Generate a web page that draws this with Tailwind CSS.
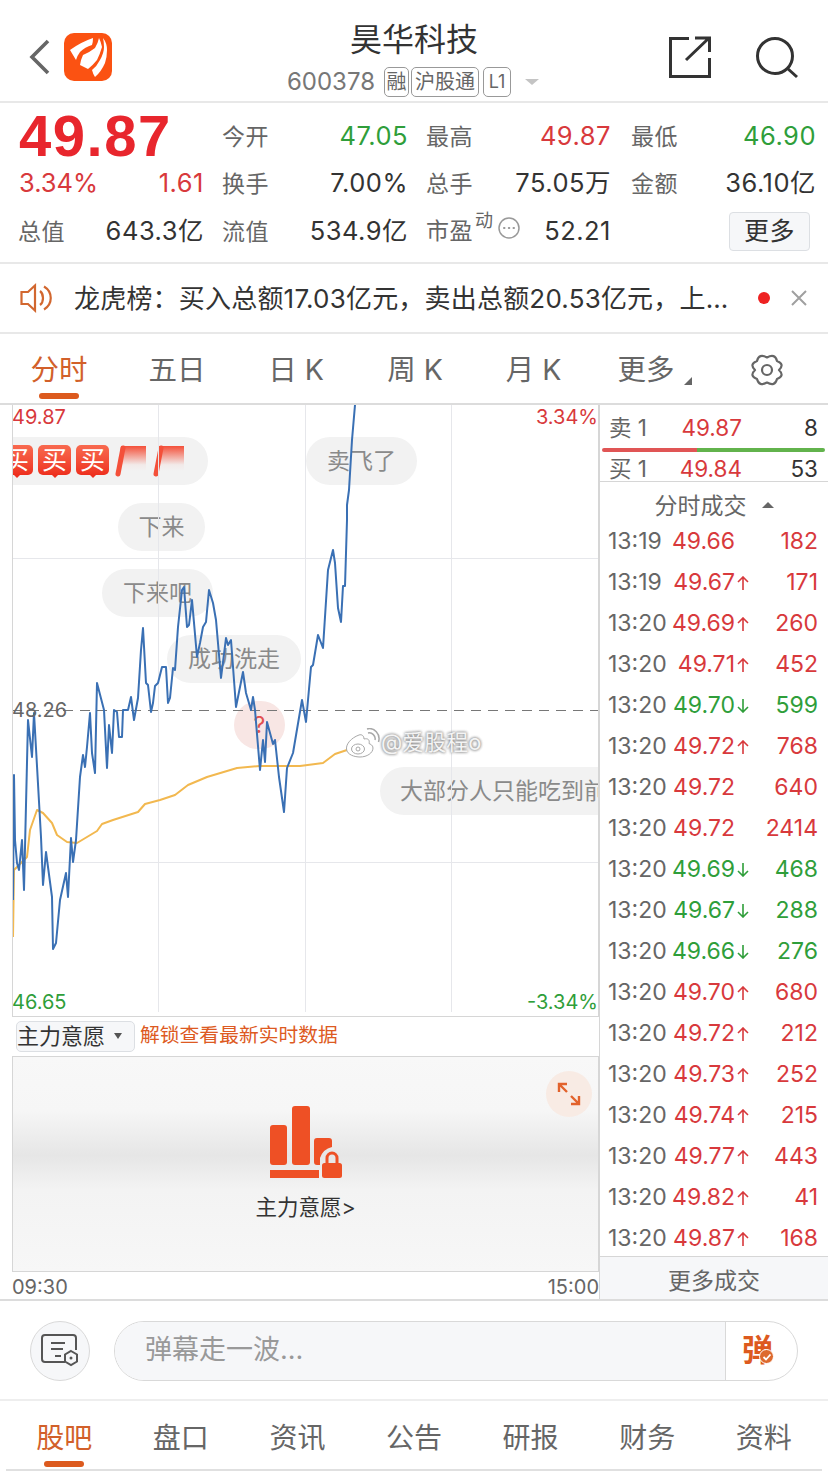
<!DOCTYPE html>
<html lang="zh">

<head>
    <meta charset="UTF-8">
    <meta name="viewport" content="width=device-width, initial-scale=1.0">
    <title>昊华科技</title>
    <script src="https://cdn.jsdelivr.net/npm/@tailwindcss/browser@4"></script>
</head>

<body class="bg-white">
    <div id="page" class="w-[828px] h-[1483px] flex flex-col bg-white overflow-hidden text-[#333] font-['Inter','Noto_Sans_CJK_SC',sans-serif]">

        <!-- HEADER -->
        <div id="header" class="relative h-[103px] shrink-0 flex items-start border-b-2 border-[#e8e8e8]">
            <svg class="mt-[39px] ml-[28px] w-[22px] h-[36px]" viewBox="0 0 22 36" fill="none" stroke="#666" stroke-width="3.600">
                <path d="M20 2 L4 18 L20 34" />
            </svg>
            <div class="mt-[33px] ml-[14px] w-[48px] h-[48px] rounded-[10px] bg-[#fb5212]">
                <svg viewBox="0 0 48 48" class="w-full h-full" fill="#fff">
                    <path d="M6 17 Q17 9 29 5 Q29 9 28 12 Q21 14 16 19 Q13 23 12 27 Q9 22 6 17 Z" />
                    <path d="M16 32 Q17 26 19 22 Q26 19 31 15 Q34 10 35 5 Q37 9 38 14 Q36 21 33 27 Q29 32 24 36 Q20 34 16 32 Z" />
                    <path d="M28 37 Q33 33 36 27 Q40 20 40 14 Q40 9 39 5 Q43 10 43 17 Q43 24 41 30 Q37 39 31 44 Q29 41 28 37 Z" />
                </svg>
            </div>
            <div class="absolute left-0 right-0 top-[21px] flex flex-col items-center">
                <div class="text-[32px] leading-[38px] text-[#333]">昊华科技</div>
                <div class="flex items-center mt-[7px] h-[32px] ml-[-2px]">
                    <span class="text-[24px] text-[#777] mr-[9px]">600378</span>
                    <span class="h-[30px] w-[25px] border border-[#999] rounded-[5px] text-[20px] leading-[28px] text-center text-[#666]">融</span>
                    <span class="h-[30px] w-[68px] ml-[2px] border border-[#999] rounded-[5px] text-[20px] leading-[28px] text-center text-[#666]">沪股通</span>
                    <span class="h-[30px] w-[28px] ml-[4px] border border-[#999] rounded-[5px] text-[18px] leading-[28px] text-center text-[#666]">L1</span>
                    <span class="ml-[14px] w-0 h-0 border-x-[7px] border-x-transparent border-t-[6px] border-t-[#c4c4c4]"></span>
                </div>
            </div>
            <div class="ml-auto mt-[35px] mr-[29px] flex gap-[43px]">
                <svg class="w-[44px] h-[44px]" viewBox="0 0 44 44" fill="none" stroke="#333" stroke-width="3">
                    <path d="M21 3.500 H2.500 V41.500 H41.500 V23" />
                    <path d="M18 25 L41 3 M27 3 H41.500 V17" />
                </svg>
                <svg class="w-[44px] h-[44px]" viewBox="0 0 44 44" fill="none" stroke="#333" stroke-width="3">
                    <circle cx="20" cy="21" r="17.500" />
                    <path d="M32 33 L42 42" />
                </svg>
            </div>
        </div>

        <!-- STATS -->
        <div id="stats" class="h-[161px] shrink-0 border-b-2 border-[#e8e8e8] pl-[18px] pt-[9px] grid grid-cols-[186px_186px_185px_187px] grid-rows-[48px_47px_48px] gap-x-[18px] text-[25.500px] tracking-[0.500px] text-[#333] items-center">
            <div class="ml-[1px] text-[#e8262d] font-bold text-[58px] leading-[48px] tracking-[1.500px] font-['Liberation_Sans']">49.87</div>
            <div class="flex items-baseline justify-between"><span class="text-[#666] text-[23px]">今开</span><span class="text-[#2f9e3a]">47.05</span></div>
            <div class="flex items-baseline justify-between"><span class="text-[#666] text-[23px]">最高</span><span class="text-[#d8393c]">49.87</span></div>
            <div class="flex items-baseline justify-between pl-[2px]"><span class="text-[#666] text-[23px]">最低</span><span class="text-[#2f9e3a]">46.90</span></div>

            <div class="flex justify-between ml-[1px] text-[#d8393c]"><span class="tracking-[0px]">3.34%</span><span>1.61</span></div>
            <div class="flex items-baseline justify-between"><span class="text-[#666] text-[23px]">换手</span><span>7.00%</span></div>
            <div class="flex items-baseline justify-between"><span class="text-[#666] text-[23px]">总手</span><span>75.05万</span></div>
            <div class="flex items-baseline justify-between pl-[2px]"><span class="text-[#666] text-[23px]">金额</span><span>36.10亿</span></div>

            <div class="flex items-baseline justify-between"><span class="text-[#666] text-[23px]">总值</span><span>643.3亿</span></div>
            <div class="flex items-baseline justify-between"><span class="text-[#666] text-[23px]">流值</span><span>534.9亿</span></div>
            <div class="flex items-center">
                <span class="text-[#666] text-[23px]">市盈</span>
                <span class="text-[#666] text-[18px] leading-[18px] mb-[20px] ml-[2px]">动</span>
                <svg class="w-[22px] h-[22px] mb-[6px] ml-[4px]" viewBox="0 0 22 22" fill="none" stroke="#999" stroke-width="1.500">
                    <circle cx="11" cy="11" r="10" />
                    <path d="M6 11h.5M10.800 11h.5M15.500 11h.5" stroke-width="2" stroke-linecap="round" />
                </svg>
                <span class="ml-auto">52.21</span>
            </div>
            <div class="flex justify-end pr-[6px]">
                <div class="w-[81px] h-[39px] rounded-[4px] border border-[#dcdfe3] bg-[#f6f7f9] text-center leading-[37px] text-[25px]">更多</div>
            </div>
        </div>

        <!-- NOTICE -->
        <div id="notice" class="h-[70px] shrink-0 border-b-2 border-[#e8e8e8] flex items-center pl-[20px]">
            <svg class="w-[34px] h-[30px]" viewBox="0 0 34 30" fill="none" stroke="#d2672f" stroke-width="2.200">
                <path d="M1.500 9 H8 L15 2.500 V27.500 L8 21 H1.500 Z" />
                <path d="M20 8 C24 11 24 19 20 22" />
                <path d="M24 3.500 C33 9 33 21 24 26.500" />
            </svg>
            <span class="ml-[20px] text-[26px] tracking-[0.200px] text-[#333] whitespace-nowrap">龙虎榜&#xFF1A;买入总额17.03亿元&#xFF0C;卖出总额20.53亿元&#xFF0C;上…</span>
            <span class="ml-auto w-[12px] h-[12px] rounded-full bg-[#ee2222]"></span>
            <svg class="ml-[20px] mr-[20px] w-[18px] h-[18px]" viewBox="0 0 18 18" stroke="#a0a0a0" stroke-width="2">
                <path d="M2 2 L16 16 M16 2 L2 16" />
            </svg>
        </div>

        <!-- PERIOD TABS -->
        <div id="tabs" class="h-[71px] shrink-0 border-b-2 border-[#dcdcdc] grid grid-cols-[repeat(7,118px)] text-[28.500px] text-[#666] text-center">
            <div class="relative leading-[72px] text-[#d2602a]">分时<span class="absolute left-[39px] top-[59px] w-[40px] h-[6px] rounded-full bg-[#dc5a1e]"></span></div>
            <div class="leading-[72px]">五日</div>
            <div class="leading-[72px] pl-[2px]">日 K</div>
            <div class="leading-[72px] pl-[4px]">周 K</div>
            <div class="leading-[72px] pl-[5px]">月 K</div>
            <div class="relative leading-[72px] pr-[6px]">更多<span class="absolute left-[94px] top-[43px] w-0 h-0 border-l-[8px] border-l-transparent border-b-[8px] border-b-[#666]"></span></div>
            <div class="flex items-center justify-center">
                <svg class="w-[34px] h-[32px]" viewBox="0 0 32 32" fill="none" stroke="#666" stroke-width="2.200" stroke-linejoin="round">
                    <path d="M16 3.500 Q24 -1 26 7 Q34 10 28 16 Q34 22 26 25 Q24 33 16 28.500 Q8 33 6 25 Q-2 22 4 16 Q-2 10 6 7 Q8 -1 16 3.500 Z" />
                    <circle cx="16" cy="16" r="5" />
                </svg>
            </div>
        </div>

        <!-- MAIN -->
        <div id="main" class="h-[896px] shrink-0 flex border-b-2 border-[#dcdcdc]">
            <div class="w-[599px] shrink-0 flex flex-col pl-[12px]">
                <div id="chart" class="relative h-[612px] shrink-0 overflow-hidden border-x border-b border-[#d6d6d6] box-border">
                    <!-- danmaku bubbles -->
                    <div class="absolute left-[-30px] top-[32px] w-[225px] h-[48px] rounded-full bg-[#f2f2f2] flex items-center pl-[17px] gap-[5px]">
                        <span class="relative w-[33px] h-[30px] mb-[2px] rounded-[5px] bg-gradient-to-b from-[#f8694f] to-[#ee2f1e] text-white text-[25px] leading-[30px] text-center">买<span class="absolute left-[13px] top-[29px] w-0 h-0 border-x-[4px] border-x-transparent border-t-[4px] border-t-[#ee2f1e]"></span></span>
                        <span class="relative w-[33px] h-[30px] mb-[2px] rounded-[5px] bg-gradient-to-b from-[#f8694f] to-[#ee2f1e] text-white text-[25px] leading-[30px] text-center">买<span class="absolute left-[13px] top-[29px] w-0 h-0 border-x-[4px] border-x-transparent border-t-[4px] border-t-[#ee2f1e]"></span></span>
                        <span class="relative w-[33px] h-[30px] mb-[2px] rounded-[5px] bg-gradient-to-b from-[#f8694f] to-[#ee2f1e] text-white text-[25px] leading-[30px] text-center">买<span class="absolute left-[13px] top-[29px] w-0 h-0 border-x-[4px] border-x-transparent border-t-[4px] border-t-[#ee2f1e]"></span></span>
                        <svg class="w-[32px] h-[32px] ml-[1px]" viewBox="0 0 32 32" fill="none">
                            <defs>
                                <linearGradient id="fade" x1="0" y1="0" x2="0" y2="1">
                                    <stop offset="0" stop-color="#f4503a" />
                                    <stop offset="0.750" stop-color="#f4503a" stop-opacity="0.050" />
                                    <stop offset="1" stop-color="#f4503a" stop-opacity="0" />
                                </linearGradient>
                            </defs>
                            <path d="M6 1 H31 V26 H3 Z" fill="url(#fade)" />
                            <path d="M8 3 L3 29" stroke="#f4503a" stroke-width="5" stroke-linecap="round" />
                        </svg>
                        <svg class="w-[32px] h-[32px] ml-[1px]" viewBox="0 0 32 32" fill="none">
                            <path d="M6 1 H31 V26 H3 Z" fill="url(#fade)" />
                            <path d="M8 3 L3 29" stroke="#f4503a" stroke-width="5" stroke-linecap="round" />
                        </svg>
                    </div>
                    <div class="absolute left-[293px] top-[32px] w-[111px] h-[48px] rounded-full bg-[#f2f2f2] text-[#8a8a8a] text-[23px] leading-[48px] text-center">卖飞了</div>
                    <div class="absolute left-[105px] top-[98px] w-[87px] h-[48px] rounded-full bg-[#f2f2f2] text-[#8a8a8a] text-[23px] leading-[48px] text-center">下来</div>
                    <div class="absolute left-[89px] top-[164px] w-[111px] h-[48px] rounded-full bg-[#f2f2f2] text-[#8a8a8a] text-[23px] leading-[48px] text-center">下来吧</div>
                    <div class="absolute left-[154px] top-[230px] w-[134px] h-[48px] rounded-full bg-[#f2f2f2] text-[#8a8a8a] text-[23px] leading-[48px] text-center">成功洗走</div>
                    <div class="absolute left-[221px] top-[296px] w-[51px] h-[48px] rounded-full bg-[#f8e6e4] text-[#e2514f] text-[23px] leading-[48px] text-center">?</div>
                    <div class="absolute left-[367px] top-[362px] w-[260px] h-[48px] rounded-full bg-[#f2f2f2] text-[#8a8a8a] text-[23px] leading-[48px] pl-[20px] whitespace-nowrap">大部分人只能吃到前</div>

                    <svg class="absolute left-[-1px] top-0" width="586" height="611" viewBox="12 405 586 611" fill="none">
                        <path d="M158.500 405 V1012 M305.500 405 V1012 M451.500 405 V1012 M12 558.500 H598 M12 862.500 H598" stroke="#e6e7eb" stroke-width="1" />
                        <path d="M12 710.500 H598" stroke="#777" stroke-width="1.200" stroke-dasharray="10 7" />
                        <polyline stroke="#f2b84f" stroke-width="2" stroke-linejoin="round"
                            points="13,937 14,870 20,864 27,857 30,830 37,810 43,813 52,823 57,835 67,842 77,843 97,831 102,824 113,820 138,812 145,804 160,800 175,795 188,785 207,777 237,768 260,766 300,766 323,763 335,754 350,749" />
                        <polyline stroke="#3a70b4" stroke-width="2" stroke-linejoin="round"
                            points="13,900 14,775 15,840 17,863 19,870 22,840 24,890 28,720 32,757 34,713 41,837 43,885 46,852 52,897 53,949 56,943 60,900 66,873 68,897 71,838 73,862 76,840 80,777 83,755 85,767 87,747 90,713 92,753 95,773 97,683 104,710 107,768 109,725 112,753 114,710 117,712 119,737 122,737 123,710 128,710 131,697 134,720 138,698 141,650 143,628 146,683 148,685 151,712 153,703 155,686 158,683 162,667 166,667 168,703 170,698 173,668 175,670 178,627 182,590 184,587 187,627 189,625 192,600 197,657 200,643 203,627 206,622 209,590 213,603 216,620 221,678 226,638 228,645 231,640 236,707 243,672 246,693 251,710 253,697 255,710 260,770 263,740 265,762 267,722 273,744 275,740 279,777 284,812 287,768 293,753 302,700 306,722 311,667 313,665 318,635 323,648 328,570 333,550 335,563 338,608 341,622 343,586 345,586 347,520 347,505 349,490 352,440 355,405" />
                    </svg>

                    <span class="absolute left-[-1px] top-0 text-[20px] leading-[24px] text-[#d8393c]">49.87</span>
                    <span class="absolute right-0 top-0 text-[20px] leading-[24px] text-[#d8393c]">3.34%</span>
                    <span class="absolute left-[-1px] top-[293px] text-[20px] leading-[24px] text-[#666]">48.26</span>
                    <span class="absolute left-[-1px] top-[585px] text-[20px] leading-[24px] text-[#2f9e3a]">46.65</span>
                    <span class="absolute right-0 top-[585px] text-[20px] leading-[24px] text-[#2f9e3a]">-3.34%</span>

                    <!-- watermark -->
                    <div class="absolute left-[332px] top-[321px] flex items-center">
                        <svg class="w-[35px] h-[30px]" viewBox="0 0 35 30" fill="#fff" stroke="#a8a8a8" stroke-width="1">
                            <path d="M14 7 C6 10 1 16 1.500 21 C2 27 10 29 15 29 C22 29 28 25 28 20 C28 17 25 16 24 15.500 C25 12 23 10 19 11 C19 8 17 6 14 7 Z" />
                            <ellipse cx="13" cy="21" rx="6.500" ry="5" />
                            <circle cx="13" cy="21" r="2" />
                            <path d="M23 5 C27 4 31 8 30 12 M22 1 C29 -1 36 6 33.500 14" fill="none" stroke-width="1.500" />
                        </svg>
                        <span class="ml-[1px] text-[22px] text-[#f4f4f4] [text-shadow:0_0_3px_#888,0_0_3px_#888]">@爱股程o</span>
                    </div>
                </div>

                <div class="h-[39px] shrink-0 flex items-center pb-[1px] pl-[4px]">
                    <div class="w-[119px] h-[31px] rounded-[5px] border border-[#dcdfe3] bg-[#f6f7f9] flex items-center text-[22px] text-[#333] whitespace-nowrap">
                        主力意愿
                        <span class="ml-[9px] w-0 h-0 border-x-[4px] border-x-transparent border-t-[6px] border-t-[#555]"></span>
                    </div>
                    <span class="ml-[5px] text-[19.800px] text-[#dd5a22] whitespace-nowrap">解锁查看最新实时数据</span>
                </div>

                <div id="panel" class="relative h-[216px] shrink-0 border border-[#d6d6d6] bg-[linear-gradient(to_bottom,#f8f8f8_0%,#f6f6f6_25%,#e6e6e6_46%,#f3f3f3_62%,#f7f7f7_100%)] flex flex-col items-center">
                    <svg class="mt-[49px] w-[72px] h-[72px]" viewBox="0 0 72 72" fill="#ee5025">
                        <rect x="0" y="19" width="17" height="40" rx="3" />
                        <rect x="22" y="0" width="18" height="59" rx="3" />
                        <path d="M44 35 Q44 32 47 32 H59 Q62 32 62 35 V41 Q53 43 50 52 V59 H47 Q44 59 44 56 Z" />
                        <rect x="0" y="64" width="49" height="8" />
                        <path d="M57 58 V52 A5 5 0 0 1 67 52 V58" fill="none" stroke="#ee5025" stroke-width="3" />
                        <rect x="52" y="57" width="20" height="15" rx="2.500" />
                    </svg>
                    <span class="mt-[15px] text-[21.500px] leading-[28px] text-[#333]">主力意愿&gt;</span>
                    <div class="absolute right-[6px] top-[14px] w-[46px] h-[46px] rounded-full bg-[#f8ebe4] flex items-center justify-center">
                        <svg class="w-[24px] h-[24px]" viewBox="0 0 24 24" fill="none" stroke="#e2622c" stroke-width="2.400">
                            <path d="M2 10 V2 H10 M2 2 L10 10 M14 14 L22 22 M22 14 V22 H14" />
                        </svg>
                    </div>
                </div>

                <div class="flex-1 flex items-center justify-between text-[20px] text-[#666]">
                    <span>09:30</span><span>15:00</span>
                </div>
            </div>

            <!-- ORDER BOOK -->
            <div id="book" class="flex-1 min-h-0 flex flex-col border-l border-[#d6d6d6]">
                <div class="h-[43px] shrink-0 flex items-center pl-[9px] pr-[10px] text-[22.500px] pt-[3px]">
                    <span class="w-[64px] text-[#666]">卖 1</span>
                    <span class="w-[69px] text-right text-[#d8393c]">49.87</span>
                    <span class="ml-auto text-[#333]">8</span>
                </div>
                <div class="h-[4px] shrink-0 ml-[2px] mr-[3px] flex">
                    <span class="w-[95px] bg-[#e05555] rounded-l-full"></span>
                    <span class="flex-1 bg-[#62b34c] rounded-r-full"></span>
                </div>
                <div class="h-[30px] shrink-0 flex items-center pl-[9px] pr-[10px] pt-[4px] text-[22.500px] border-b border-[#d6d6d6]">
                    <span class="w-[64px] text-[#666]">买 1</span>
                    <span class="w-[69px] text-right text-[#d8393c]">49.84</span>
                    <span class="ml-auto text-[#333]">53</span>
                </div>
                <div class="h-[39px] shrink-0 flex items-center justify-center pt-[10px] text-[23px] text-[#666]">
                    分时成交
                    <span class="ml-[15px] mb-[3px] w-0 h-0 border-x-[6px] border-x-transparent border-b-[6px] border-b-[#666]"></span>
                </div>
                <div id="ticks" class="h-[735px] shrink-0 flex flex-col"></div>
                <div class="flex-1 min-h-0 overflow-hidden border-t border-[#d6d6d6] bg-[#f6f7f9] text-center text-[23px] leading-[48px] text-[#666]">更多成交</div>
            </div>
        </div>

        <!-- COMMENT BAR -->
        <div id="comment" class="h-[100px] shrink-0 flex items-center pl-[30px] pt-[2px] border-b-2 border-[#eeeeee]">
            <div class="w-[60px] h-[60px] rounded-full border border-[#d9d9d9] bg-[#f6f7f9] flex items-center justify-center">
                <svg class="w-[38px] h-[34px]" viewBox="0 0 38 34" fill="none" stroke="#555" stroke-width="2">
                    <path d="M24 28 H4 Q1 28 1 25 V4 Q1 1 4 1 H32 Q35 1 35 4 V16" />
                    <path d="M10 9 H24 M10 15 H22 M14 22 H20" />
                    <path d="M30 17 L36 20.500 V27.500 L30 31 L24 27.500 V20.500 Z" fill="#f6f7f9" />
                    <circle cx="30" cy="24" r="1.500" fill="#555" stroke="none" />
                </svg>
            </div>
            <div class="ml-[24px] w-[684px] h-[60px] rounded-full border border-[#d9d9d9] overflow-hidden flex">
                <div class="flex-1 bg-[#f6f7f9] border-r border-[#d9d9d9] pl-[30px] text-[27px] leading-[56px] text-[#999]">弹幕走一波...</div>
                <div class="relative w-[71px] text-[31px] leading-[56px] font-bold text-[#dd5a1e] pl-[16px]">弹
                    <span class="absolute left-[33px] top-[27px] w-[15px] h-[15px] rounded-full bg-[#dd6a2e] border border-white flex items-center justify-center">
                        <svg class="w-[10px] h-[10px]" viewBox="0 0 10 10" fill="none" stroke="#fff" stroke-width="1.800"><path d="M1.500 5 L4 7.500 L8.500 2.500" /></svg>
                    </span>
                </div>
            </div>
        </div>

        <!-- BOTTOM TABS -->
        <div id="bottom" class="h-[70px] shrink-0 mx-[6px] border-b-2 border-[#e0e0e0] grid grid-cols-7 text-[28px] text-[#666] text-center">
            <div class="relative leading-[74px] text-[#d2602a]">股吧<span class="absolute left-[38px] top-[60px] w-[40px] h-[6px] rounded-full bg-[#dc5a1e]"></span></div>
            <div class="leading-[74px]">盘口</div>
            <div class="leading-[74px]">资讯</div>
            <div class="leading-[74px]">公告</div>
            <div class="leading-[74px]">研报</div>
            <div class="leading-[74px]">财务</div>
            <div class="leading-[74px]">资料</div>
        </div>
    </div>

    <script>
        // time, price, direction, volume
        const ticks = [
            ["13:19", "49.66", "", "182"],
            ["13:19", "49.67", "up", "171"],
            ["13:20", "49.69", "up", "260"],
            ["13:20", "49.71", "up", "452"],
            ["13:20", "49.70", "down", "599"],
            ["13:20", "49.72", "up", "768"],
            ["13:20", "49.72", "", "640"],
            ["13:20", "49.72", "", "2414"],
            ["13:20", "49.69", "down", "468"],
            ["13:20", "49.67", "down", "288"],
            ["13:20", "49.66", "down", "276"],
            ["13:20", "49.70", "up", "680"],
            ["13:20", "49.72", "up", "212"],
            ["13:20", "49.73", "up", "252"],
            ["13:20", "49.74", "up", "215"],
            ["13:20", "49.77", "up", "443"],
            ["13:20", "49.82", "up", "41"],
            ["13:20", "49.87", "up", "168"]
        ]
        const upArrow = `<svg class="w-[14px] h-[14px]" viewBox="0 0 14 14" fill="none" stroke="#d8393c" stroke-width="1.600"><path d="M7 14 V1 M2 6 L7 1 L12 6" /></svg>`
        const downArrow = `<svg class="w-[14px] h-[14px]" viewBox="0 0 14 14" fill="none" stroke="#2f9e3a" stroke-width="1.600"><path d="M7 0 V13 M2 8 L7 13 L12 8" /></svg>`

        document.getElementById("ticks").innerHTML = ticks.map(([time, price, dir, vol]) => {
            const color = dir === "down" ? "text-[#2f9e3a]" : "text-[#d8393c]"
            const arrow = dir === "up" ? upArrow : dir === "down" ? downArrow : ""
            return `<div class="h-[41px] shrink-0 flex items-center pl-[8px] pr-[10px] text-[23px]">
                <span class="w-[60px] text-[#666]">${time}</span>
                <span class="w-[67px] text-right ${color}">${price}</span>
                <span class="w-[16px] flex justify-center">${arrow}</span>
                <span class="flex-1 text-right ${color}">${vol}</span>
            </div>`
        }).join("")
    </script>
</body>

</html>
